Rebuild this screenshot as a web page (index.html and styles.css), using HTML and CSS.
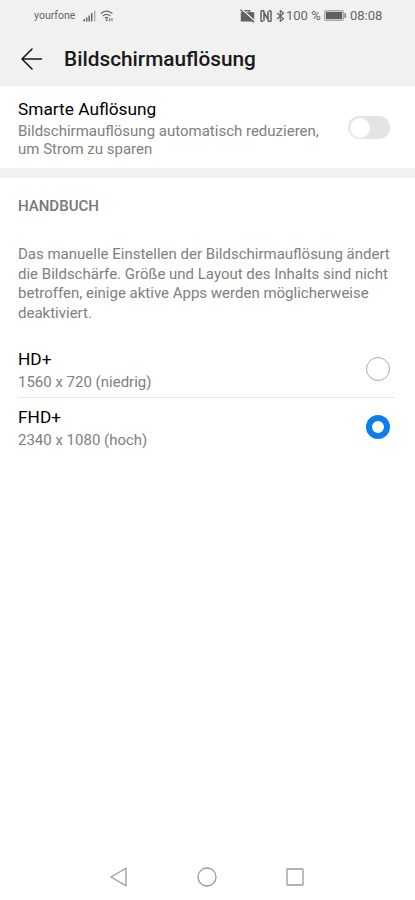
FILE: index.html
```html
<!DOCTYPE html>
<html lang="de">
<head>
<meta charset="utf-8">
<meta name="viewport" content="width=device-width, initial-scale=1">
<title>Bildschirmauflösung</title>
<link rel="stylesheet" href="styles.css">
</head>
<body>
<div class="status">
  <span class="carrier">yourfone</span>
  <svg class="signal" width="13" height="12" viewBox="0 0 13 12"><path d="M1.2 9v2.5M3.7 7.5v4M6.2 5.5v6M8.7 3v8.5" stroke="#666" stroke-width="1.5"/><path d="M11.7 .5v11" stroke="#aaa" stroke-width="1.3"/></svg>
  <svg class="wifi" width="14" height="12" viewBox="0 0 14 12" fill="none" stroke="#666" stroke-width="1.3"><path d="M.8 3.6Q6.5-1.4 12.4 3.6M2.8 6Q6.5 2.7 10.4 6M4.8 8.2Q6.5 6.8 8.2 8.2"/><circle cx="6.6" cy="10.2" r="1" fill="#666" stroke="none"/><path d="M9.7 8.2v3M8.7 10.1l1 1M12 11.3v-3M11 9.3l1-1" stroke-width=".9"/></svg>
  <span class="spacer"></span>
  <svg class="case" width="15" height="14" viewBox="0 0 15 14"><path d="M.8 3.2h13.4v9.3H.8z" fill="#606060"/><path d="M5 3.5V1.6h4.6v1.9" fill="none" stroke="#606060" stroke-width="1.4"/><path d="M1.8 .3L15 12.2" stroke="#f1f1f1" stroke-width="1.4"/><path d="M.5 .8L14 13.3" stroke="#606060" stroke-width="1.2"/></svg>
  <svg class="nfc" width="12" height="12" viewBox="0 0 12 12" fill="none" stroke="#606060"><path d="M4.3.8H1.8Q1 .8 1 1.6v8.8q0 .8.8.8h1.4M7.7 11.2h2.5q.8 0 .8-.8V1.6q0-.8-.8-.8H8.8" stroke-width="1.5"/><path d="M4 10.7V2.4l4 7.2V1.3" stroke-width="1.6"/></svg>
  <svg class="bt" width="9" height="12" viewBox="0 0 9 12"><path d="M1 3l6.5 5.8L4.3 11.5V.5l3.2 2.7L1 9" fill="none" stroke="#666" stroke-width="1.2"/></svg>
  <span class="percent">100 %</span>
  <svg class="battery" width="22" height="11" viewBox="0 0 22 11"><rect x=".5" y=".5" width="19" height="10" rx="1" fill="#c8c8c8" stroke="#aaa"/><path d="M2 2h16v7H2z" fill="#606060"/><path d="M21.2 3v5" stroke="#777" stroke-width="1.4"/></svg>
  <span class="clock">08:08</span>
</div>
<header class="header">
  <svg width="22" height="22" viewBox="0 0 22 22" fill="none" stroke="#1a1a1a" stroke-width="1.6" stroke-linecap="round" stroke-linejoin="round"><path d="M11 1L1 11l10 10M1 11h19.5"/></svg>
  <h1>Bildschirmauflösung</h1>
</header>
<main>
  <section class="smart">
    <div>
      <h2>Smarte Auflösung</h2>
      <p>Bildschirmauflösung automatisch reduzieren,<br>um Strom zu sparen</p>
    </div>
    <span class="toggle"></span>
  </section>
  <section class="manual">
    <h3>HANDBUCH</h3>
    <p class="info">Das manuelle Einstellen der Bildschirmauflösung ändert<br>die Bildschärfe. Größe und Layout des Inhalts sind nicht<br>betroffen, einige aktive Apps werden möglicherweise<br>deaktiviert.</p>
    <div class="option">
      <div><h2>HD+</h2><p>1560 x 720 (niedrig)</p></div>
      <span class="radio"></span>
    </div>
    <div class="option">
      <div><h2>FHD+</h2><p>2340 x 1080 (hoch)</p></div>
      <span class="radio checked"></span>
    </div>
  </section>
</main>
<nav class="nav">
  <svg width="20" height="20" viewBox="0 0 20 20"><path d="M17 1.2v17.6L2 10z"/></svg>
  <svg width="20" height="20" viewBox="0 0 20 20"><circle cx="10" cy="10" r="9"/></svg>
  <svg width="20" height="20" viewBox="0 0 20 20"><rect x="2" y="2" width="16" height="16" rx=".5"/></svg>
</nav>
</body>
</html>
```
FILE: styles.css
```css
* { box-sizing: border-box; margin: 0; padding: 0; }
body {
  height: 900px;
  display: flex;
  flex-direction: column;
  background: #fff;
  color: #000;
  font-family: Roboto, sans-serif;
  overflow: hidden;
}
svg { display: block; flex: none; }
.status {
  height: 32px;
  padding: 0 33px 1px 34px;
  display: flex;
  align-items: center;
  background: #f1f1f1;
  color: #666;
  font-size: 13px;
  white-space: nowrap;
}
.carrier { font-size: 10.5px; width: 49px; }
.wifi { margin-left: 4px; }
.spacer { flex: 1; }
.nfc { margin-left: 5px; }
.bt { margin-left: 4px; }
.percent { margin-left: 1px; width: 38px; }
.clock { width: 32px; margin-left: 4px; }
.header {
  height: 54px;
  padding: 0 21px 1px;
  display: flex;
  align-items: center;
  gap: 21px;
  background: #f1f1f1;
}
h1 { font-size: 20.8px; font-weight: 500; color: #1a1a1a; line-height: 26px; }
h2 { font-size: 17.3px; font-weight: 400; line-height: 22px; }
p { font-size: 15px; line-height: 18px; color: #808080; white-space: nowrap; }
.smart {
  height: 92px;
  padding: 12px 25px 0 18px;
  display: flex;
  justify-content: space-between;
  border-bottom: 10px solid #f1f1f1;
}
.smart p { padding-top: 2px; }
.toggle {
  width: 42px;
  height: 23px;
  margin-top: 18px;
  flex: none;
  border-radius: 12px;
  background: #e4e4e4;
}
.toggle::before {
  content: "";
  display: block;
  width: 20px;
  height: 20px;
  margin: 1.5px;
  border-radius: 50%;
  background: #fff;
}
.manual { padding: 18px 20px 0 18px; }
h3 { font-size: 15px; font-weight: 500; line-height: 20px; color: #777; }
.info { margin-top: 29px; line-height: 19.7px; }
.option {
  height: 58px;
  padding: 8px 5px 0 0;
  display: flex;
  justify-content: space-between;
}
.info + .option { margin-top: 16.2px; border-bottom: 1px solid #e8e8e8; }
.option p { padding-top: 3px; }
.radio {
  width: 24px;
  height: 24px;
  margin-top: 9px;
  flex: none;
  border: 1px solid #aaa;
  border-radius: 50%;
}
.checked { border: 6px solid #0a7df0; }
.nav {
  height: 46px;
  margin-top: auto;
  padding-right: 1px;
  display: flex;
  justify-content: center;
  gap: 68px;
}
.nav svg { fill: none; stroke: #999; stroke-width: 1.3; stroke-linejoin: round; margin-top: 13px; }
```
